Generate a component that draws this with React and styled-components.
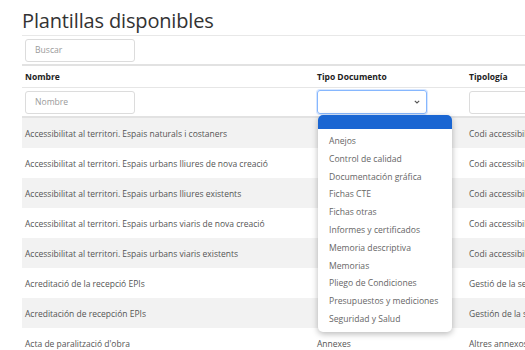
import React from "react";
import styled, { createGlobalStyle } from "styled-components";

const GlobalStyle = createGlobalStyle`
  body {
    margin: 0;
    background: #fff;
    font-family: "Open Sans", "Noto Sans", sans-serif;
    overflow: hidden;
  }
`;

const Page = styled.div`
  width: 525px;
  height: 350px;
  overflow: hidden;
  padding-left: 22px;
  box-sizing: border-box;
`;

const Title = styled.h2`
  margin: 0;
  padding-top: 9px;
  height: 26px;
  font-size: 20px;
  font-weight: 400;
  color: #333;
  line-height: 24px;
  letter-spacing: -0.15px;
`;

const Table = styled.div`
  width: 560px;
  border-top: 1px solid #e8e8e8;
`;

const Row = styled.div`
  display: grid;
  grid-template-columns: 292px 152px 1fr;
  height: ${(p) => p.$h || 30}px;
  background: ${(p) => (p.$striped ? "#f2f2f2" : "#fff")};
  border-bottom: ${(p) => p.$border || "1px solid #e6e6e6"};
  box-sizing: border-box;
`;

const Cell = styled.div`
  position: relative;
  display: flex;
  align-items: center;
  padding: 0 3px;
  font-size: 8.5px;
  color: ${(p) => (p.$head ? "#222" : "#555")};
  font-weight: ${(p) => (p.$head ? 700 : 400)};
  white-space: nowrap;
  overflow: visible;
`;

const Input = styled.div`
  width: 110px;
  height: 23px;
  border: 1px solid #dcdcdc;
  border-radius: 3px;
  box-sizing: border-box;
  display: flex;
  align-items: center;
  padding-left: 9px;
  font-size: 8.6px;
  color: #9a9a9a;
`;

const Select = styled.div`
  width: 110px;
  height: 24px;
  border: 1px solid #86b7fe;
  box-shadow: 0 0 0 1px #d6e6ff;
  border-radius: 3px;
  box-sizing: border-box;
  display: flex;
  align-items: center;
  justify-content: flex-end;
  padding-right: 6px;
`;

const Menu = styled.div`
  position: absolute;
  left: 4px;
  top: 27px;
  width: 134px;
  background: #fff;
  border-radius: 5px;
  box-shadow: 0 2px 6px rgba(0, 0, 0, 0.28);
  overflow: hidden;
  z-index: 5;
`;

const Highlight = styled.div`
  height: 14px;
  background: #1a66d2;
`;

const OptionList = styled.div`
  padding: 4px 0 3px;
`;

const Option = styled.div`
  height: 17.8px;
  line-height: 17.8px;
  padding-left: 11px;
  font-size: 8.6px;
  color: #666;
`;

const options = [
  "Anejos",
  "Control de calidad",
  "Documentación gráfica",
  "Fichas CTE",
  "Fichas otras",
  "Informes y certificados",
  "Memoria descriptiva",
  "Memorias",
  "Pliego de Condiciones",
  "Presupuestos y mediciones",
  "Seguridad y Salud",
];

const rows = [
  ["Accessibilitat al territori. Espais naturals i costaners", "", "Codi accessibilitat"],
  ["Accessibilitat al territori. Espais urbans lliures de nova creació", "", "Codi accessibilitat"],
  ["Accessibilitat al territori. Espais urbans lliures existents", "", "Codi accessibilitat"],
  ["Accessibilitat al territori. Espais urbans viaris de nova creació", "", "Codi accessibilitat"],
  ["Accessibilitat al territori. Espais urbans viaris existents", "", "Codi accessibilitat"],
  ["Acreditació de la recepció EPIs", "", "Gestió de la seguretat"],
  ["Acreditación de recepción EPIs", "", "Gestión de la seguridad"],
  ["Acta de paralització d'obra", "Annexes", "Altres annexos"],
];

const Chevron = () => (
  <svg width="6" height="4" viewBox="0 0 6 4">
    <path d="M0.8 0.8l2.2 2.2 2.2-2.2" fill="none" stroke="#555" strokeWidth="1.1" />
  </svg>
);

const App = () => (
  <Page>
    <GlobalStyle />
    <Title>Plantillas disponibles</Title>
    <Table>
      <Row $h={30} $border="2px solid #e2e2e2">
        <Cell>
          <Input>Buscar</Input>
        </Cell>
        <Cell />
        <Cell />
      </Row>
      <Row $h={22}>
        <Cell $head>Nombre</Cell>
        <Cell $head>Tipo Documento</Cell>
        <Cell $head>Tipología</Cell>
      </Row>
      <Row $h={30} $border="2px solid #e2e2e2">
        <Cell>
          <Input>Nombre</Input>
        </Cell>
        <Cell>
          <Select>
            <Chevron />
          </Select>
          <Menu>
            <Highlight />
            <OptionList>
              {options.map((o) => (
                <Option key={o}>{o}</Option>
              ))}
            </OptionList>
          </Menu>
        </Cell>
        <Cell>
          <Input />
        </Cell>
      </Row>
      {rows.map((r, i) => (
        <Row key={i} $striped={i % 2 === 0} $border="none">
          <Cell>{r[0]}</Cell>
          <Cell>{r[1]}</Cell>
          <Cell>{r[2]}</Cell>
        </Row>
      ))}
    </Table>
  </Page>
);

export default App;
